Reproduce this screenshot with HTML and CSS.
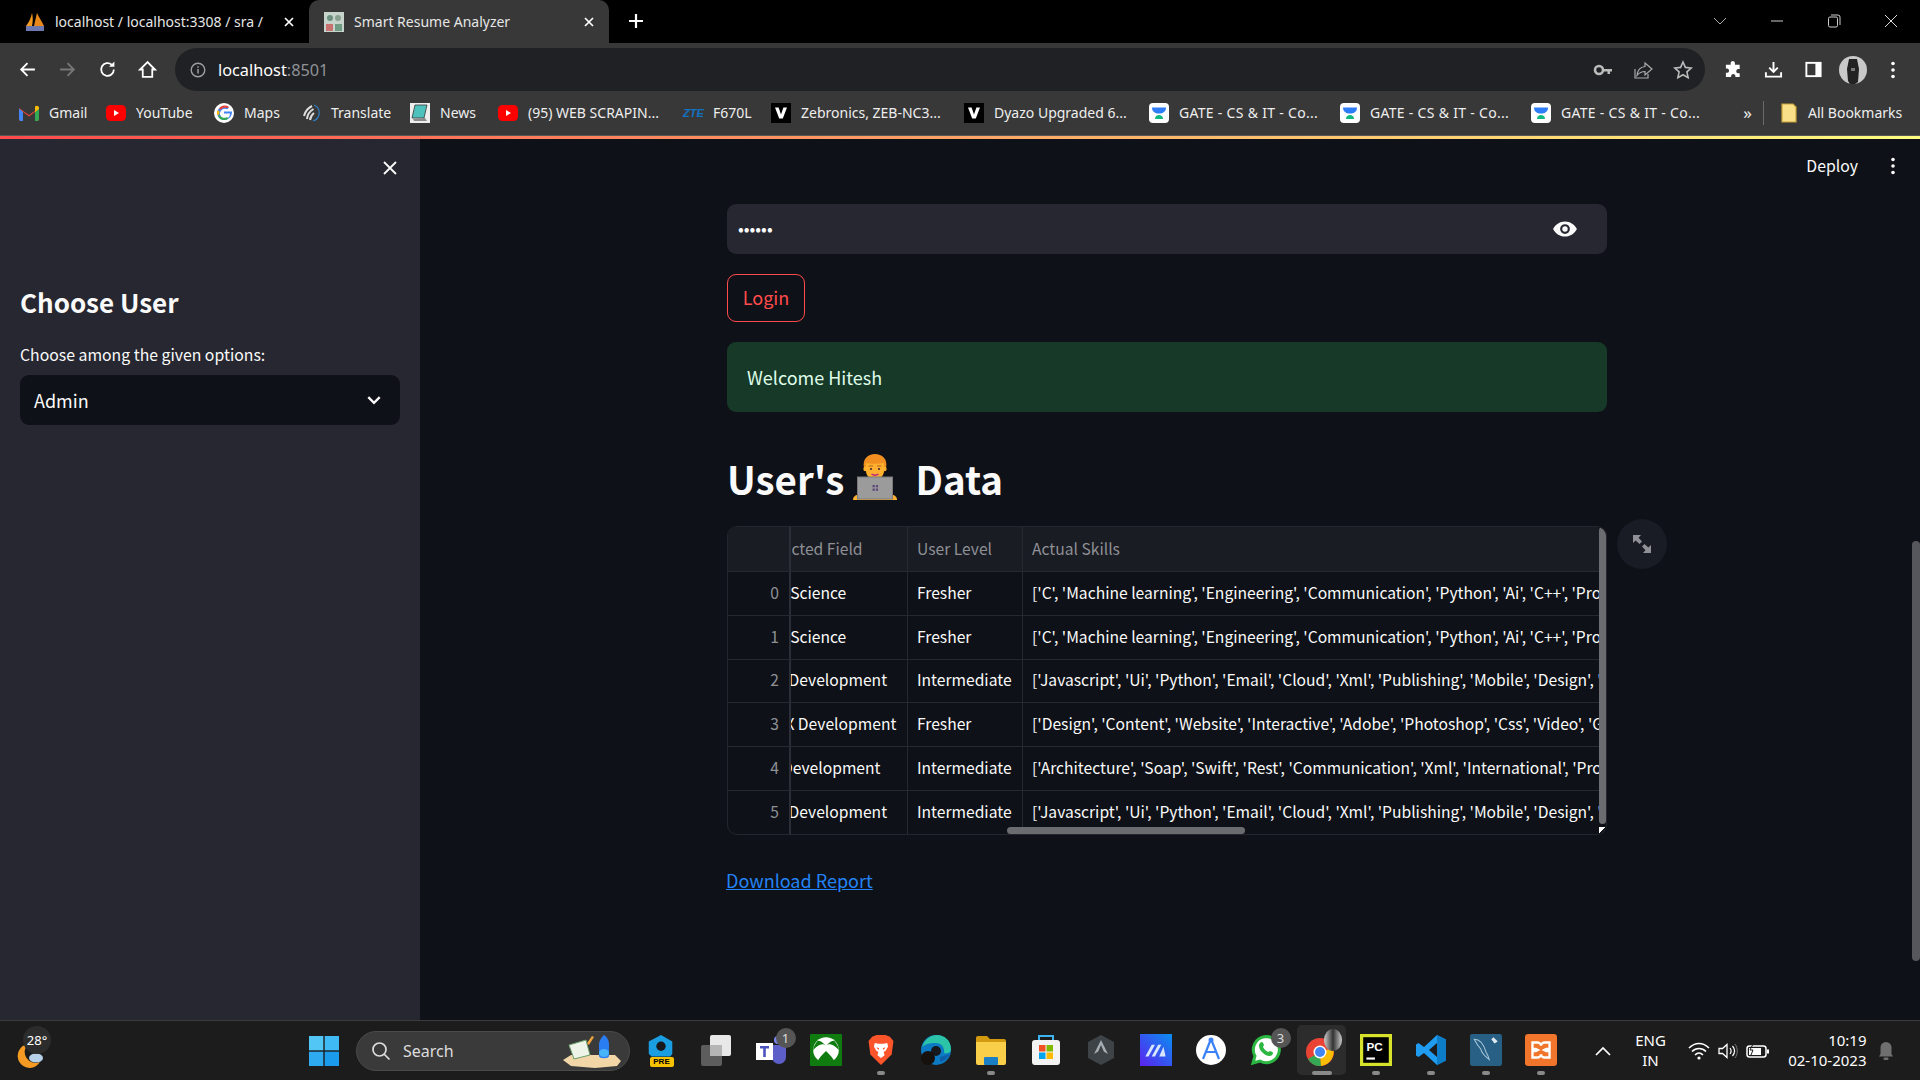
FILE: index.html
```html
<!DOCTYPE html>
<html lang="en">
<head>
<meta charset="utf-8">
<title>Smart Resume Analyzer</title>
<link rel="stylesheet" href="styles.css">
</head>
<body>
<svg class="defs" width="0" height="0" aria-hidden="true">
  <symbol id="gate" viewBox="0 0 20 20">
    <rect width="20" height="20" rx="4" fill="#fff"/>
    <path d="M3 4.500h14c0 4-3 6-7 6s-7-2-7-6z" fill="#2e7cf6"/>
    <path d="M6 16c0-3 2-4 4-4s4 1 4 4z" fill="#10b981"/>
  </symbol>
  <symbol id="vv" viewBox="0 0 20 20">
    <rect width="20" height="20" fill="#000"/>
    <path d="M4 4.500h3.600l2.400 7 2.400-7H16l-4.200 11H8.200z" fill="#fff"/>
  </symbol>
  <symbol id="yt" viewBox="0 0 20 16">
    <rect width="20" height="16" rx="4.500" fill="#f00"/>
    <path d="M8 5l5 3-5 3z" fill="#fff"/>
  </symbol>
</svg>

<div class="tabstrip">
  <div class="tab tab-off">
    <svg class="fav" viewBox="0 0 20 20"><path d="M1 14C4 10 6 6 7 1c1 4 1 8 0 13z" fill="#f29a1f"/><path d="M9 14c1-5 2-9 3-13 2 4 5 9 7 13z" fill="#e8871a"/><rect x="1" y="14" width="18" height="5" fill="#6c78af"/></svg>
    <span class="tab-text">localhost / localhost:3308 / sra /</span>
    <svg class="tab-x" viewBox="0 0 12 12"><path d="M2 2l8 8M10 2l-8 8" stroke="#fff" stroke-width="1.700"/></svg>
  </div>
  <div class="tab tab-on">
    <svg class="fav" viewBox="0 0 20 20"><rect width="20" height="20" fill="#c7d4cc"/><circle cx="6" cy="6" r="3" fill="#6d8f7f"/><circle cx="14" cy="6" r="3" fill="#87a08f"/><path d="M2 12h7v7H2z" fill="#c9716f"/><path d="M11 12h7v7h-7z" fill="#6f9c83"/></svg>
    <span class="tab-text">Smart Resume Analyzer</span>
    <svg class="tab-x" viewBox="0 0 12 12"><path d="M2 2l8 8M10 2l-8 8" stroke="#fff" stroke-width="1.700"/></svg>
  </div>
  <svg class="newtab" viewBox="0 0 16 16"><path d="M8 1v14M1 8h14" stroke="#fff" stroke-width="2.200"/></svg>
  <div class="winctl">
    <span class="wc"><svg viewBox="0 0 14 14"><path d="M1 4l6 6 6-6" fill="none" stroke="#aaa"/></svg></span>
    <span class="wc"><svg viewBox="0 0 14 14"><path d="M1 7h12" stroke="#ccc"/></svg></span>
    <span class="wc"><svg viewBox="0 0 14 14"><rect x="1.500" y="3" width="9" height="10" rx="1.500" fill="none" stroke="#ccc"/><path d="M4 1h7a2 2 0 0 1 2 2v8" fill="none" stroke="#ccc"/></svg></span>
    <span class="wc"><svg viewBox="0 0 14 14"><path d="M1 1l12 12M13 1L1 13" stroke="#ddd"/></svg></span>
  </div>
</div>

<div class="toolbar">
  <span class="tbtn"><svg viewBox="0 0 18 18"><path d="M16 9H3M9 3L3 9l6 6" fill="none" stroke="#fff" stroke-width="1.700"/></svg></span>
  <span class="tbtn"><svg viewBox="0 0 18 18"><path d="M2 9h13M9 3l6 6-6 6" fill="none" stroke="#777" stroke-width="1.700"/></svg></span>
  <span class="tbtn"><svg viewBox="0 0 18 18"><path d="M15 9a6 6 0 1 1-2-4.500" fill="none" stroke="#fff" stroke-width="1.700"/><path d="M15.500 1.500v5h-5z" fill="#fff"/></svg></span>
  <span class="tbtn"><svg viewBox="0 0 18 18"><path d="M9 2L2 9h2.500v7h9V9H16z" fill="none" stroke="#fff" stroke-width="1.700"/></svg></span>
  <div class="omni">
    <svg class="omni-info" viewBox="0 0 16 16"><circle cx="8" cy="8" r="6.800" fill="none" stroke="#9aa0a6" stroke-width="1.400"/><path d="M8 7v4.500M8 4.200v1.600" stroke="#9aa0a6" stroke-width="1.500"/></svg>
    <span class="omni-url">localhost<span class="omni-port">:8501</span></span>
    <span class="omni-end">
      <svg viewBox="0 0 20 20"><circle cx="6" cy="10" r="4" fill="none" stroke="#bbb" stroke-width="2.600"/><path d="M10 9h9v2.500h-2V14h-2.500v-2.500H10z" fill="#bbb"/></svg>
      <svg viewBox="0 0 20 20"><path d="M2 9v9h13v-4" fill="none" stroke="#aaa" stroke-width="1.200"/><path d="M12 3l7 6-7 6v-3.500C8 11.500 6 13 4 15.500c.5-5 3.500-8.500 8-9z" fill="none" stroke="#aaa" stroke-width="1.200"/></svg>
      <svg viewBox="0 0 20 20"><path d="M10 2l2.400 5.400 5.800.6-4.300 3.900 1.200 5.700L10 14.700l-5.100 2.900 1.200-5.700L1.800 8l5.800-.6z" fill="none" stroke="#bbb" stroke-width="1.600"/></svg>
    </span>
  </div>
  <span class="tbtn tbtn-first"><svg viewBox="0 0 20 20"><path d="M7 3a2.300 2.300 0 0 1 4.500 0V5h5v4.500h-1.800a2.300 2.300 0 0 0 0 4.500h1.800V18h-4.500v-1.500a2.300 2.300 0 0 0-4.500 0V18H2v-4.500h1.500a2.300 2.300 0 0 0 0-4.500H2V5h5z" fill="#fff"/></svg></span>
  <span class="tbtn"><svg viewBox="0 0 20 20"><path d="M10 2v10M5.500 8l4.500 4.500L14.500 8" fill="none" stroke="#fff" stroke-width="2"/><path d="M2 13v4.500h16V13" fill="none" stroke="#fff" stroke-width="2"/></svg></span>
  <span class="tbtn"><svg viewBox="0 0 20 20"><rect x="2.500" y="3" width="15" height="14" fill="none" stroke="#fff" stroke-width="2"/><rect x="12" y="3" width="5.500" height="14" fill="#fff"/></svg></span>
  <span class="tbtn"><svg class="avatar" viewBox="0 0 28 28"><circle cx="14" cy="14" r="14" fill="#c9c9c9"/><path d="M10 3h8l2 10-1 13-3 2h-5l-2-3-1-12z" fill="#222"/><path d="M12 12h4v3h-4z" fill="#777"/></svg></span>
  <span class="tbtn"><svg class="kebab" viewBox="0 0 6 20"><circle cx="3" cy="3.500" r="1.800" fill="#fff"/><circle cx="3" cy="10" r="1.800" fill="#fff"/><circle cx="3" cy="16.500" r="1.800" fill="#fff"/></svg></span>
</div>

<div class="bookmarks">
  <span class="bm"><svg viewBox="0 0 20 16"><path d="M0 3l10 7 10-7v11a2 2 0 0 1-2 2h-2V7l-6 4.500L4 7v9H2a2 2 0 0 1-2-2z" fill="#ea4335"/><path d="M0 3.500V14a2 2 0 0 0 2 2h2V7z" fill="#4285f4"/><path d="M16 7v9h2a2 2 0 0 0 2-2V3.500z" fill="#34a853"/><path d="M16 1.500V7l4-3V3c0-2-2.500-3-4-1.500z" fill="#fbbc04"/></svg>Gmail</span>
  <span class="bm"><svg viewBox="0 0 20 16"><use href="#yt"/></svg>YouTube</span>
  <span class="bm"><svg viewBox="0 0 20 20"><circle cx="10" cy="10" r="10" fill="#fff"/><path d="M16 10.500H10v-2h8c.3 4.500-3 8.500-7.800 8.500a7 7 0 1 1 4.700-12.200l-1.500 1.500A5 5 0 1 0 16 10.500z" fill="#4285f4"/><path d="M5 5.500a7 7 0 0 1 10-1.700l-1.500 1.500A5 5 0 0 0 6.800 6.800z" fill="#ea4335"/><path d="M3.500 12.500a7 7 0 0 1 0-5.500l2 1.500a5 5 0 0 0 0 2.600z" fill="#fbbc04"/><path d="M4 13.500l1.800-1.400A5 5 0 0 0 13 14l1.500 1.500A7 7 0 0 1 4 13.500z" fill="#34a853"/></svg>Maps</span>
  <span class="bm"><svg viewBox="0 0 20 20"><path d="M13 2a8.500 8.500 0 0 1-1 16" fill="none" stroke="#2f80c8" stroke-width="1.200"/><path d="M11 3C7 5 4 9 3 13M12.500 6C9 8 6.500 11 6 16M13 10c-2 1.500-3.500 4-4 7" fill="none" stroke="#ddd" stroke-width="2"/></svg>Translate</span>
  <span class="bm"><svg viewBox="0 0 20 20"><rect width="20" height="20" fill="#eee"/><path d="M5 2h12l-3 13H2z" fill="#4fc1bc" stroke="#333" stroke-width=".8"/><path d="M3 16l12-1 2 3H4z" fill="#8a8a8a"/></svg>News</span>
  <span class="bm"><svg viewBox="0 0 20 16"><use href="#yt"/></svg>(95) WEB SCRAPIN...</span>
  <span class="bm"><span class="zte">ZTE</span>F670L</span>
  <span class="bm"><svg viewBox="0 0 20 20"><use href="#vv"/></svg>Zebronics, ZEB-NC3...</span>
  <span class="bm"><svg viewBox="0 0 20 20"><use href="#vv"/></svg>Dyazo Upgraded 6...</span>
  <span class="bm bm-gate"><svg viewBox="0 0 20 20"><use href="#gate"/></svg>GATE - CS &amp; IT - Co...</span>
  <span class="bm bm-gate"><svg viewBox="0 0 20 20"><use href="#gate"/></svg>GATE - CS &amp; IT - Co...</span>
  <span class="bm bm-gate"><svg viewBox="0 0 20 20"><use href="#gate"/></svg>GATE - CS &amp; IT - Co...</span>
  <span class="bm bm-more">»</span>
  <span class="bm bm-all"><svg viewBox="0 0 16 20"><path d="M1 1h11l3 3v15H1z" fill="#fbe08a" stroke="#c9a437" stroke-width="1.200"/></svg>All Bookmarks</span>
</div>
<div class="deco"></div>

<div class="app">
  <aside class="sidebar">
    <div class="side-close"><svg viewBox="0 0 18 18"><path d="M3 3l12 12M15 3L3 15" stroke="#fafafa" stroke-width="1.800"/></svg></div>
    <h2 class="side-title">Choose User</h2>
    <div class="side-label">Choose among the given options:</div>
    <div class="select"><span>Admin</span><svg viewBox="0 0 14 14"><path d="M2 4.500l5 5 5-5" fill="none" stroke="#fafafa" stroke-width="2"/></svg></div>
  </aside>
  <main class="main">
    <div class="topbar">
      <span class="deploy">Deploy</span>
      <svg class="kebab" viewBox="0 0 6 20"><circle cx="3" cy="3.500" r="1.800" fill="#fafafa"/><circle cx="3" cy="10" r="1.800" fill="#fafafa"/><circle cx="3" cy="16.500" r="1.800" fill="#fafafa"/></svg>
    </div>
    <div class="content">
      <div class="pw"><span class="pw-dots">••••••</span>
        <svg viewBox="0 0 24 24"><path d="M12 5C7 5 3 8 1 12c2 4 6 7 11 7s9-3 11-7c-2-4-6-7-11-7zm0 11.500a4.500 4.500 0 1 1 0-9 4.500 4.500 0 0 1 0 9zm0-7a2.500 2.500 0 1 0 0 5 2.500 2.500 0 0 0 0-5z" fill="#fafafa"/></svg>
      </div>
      <button class="login">Login</button>
      <div class="alert">Welcome Hitesh</div>
      <h1 class="title"><span>User's</span>
        <svg class="emoji" viewBox="0 0 44 46"><path d="M11 14C9 5 15 0 22 0s13 5 11 14l-2 1H13z" fill="#f19020"/><circle cx="12.500" cy="15" r="2.200" fill="#ffb02e"/><circle cx="31.500" cy="15" r="2.200" fill="#ffb02e"/><path d="M13 9c3 1 12 1 18 0v8c0 5-4 8-9 8s-9-3-9-8z" fill="#ffb02e"/><rect x="15.500" y="11.500" width="4.500" height="1" fill="#b5651d"/><rect x="24" y="11.500" width="4.500" height="1" fill="#b5651d"/><circle cx="18" cy="15" r="1.100" fill="#402a32"/><circle cx="26" cy="15" r="1.100" fill="#402a32"/><path d="M18.500 20c2.500 1.800 4.500 1.800 7 0" stroke="#bb1d80" stroke-width="1.500" fill="none"/><path d="M0 46c0-3 2-5 5-5h34c3 0 5 2 5 5z" fill="#ffb02e"/><rect x="4.500" y="23" width="35" height="22" fill="#9b9b9b" stroke="#7a7a7a"/><rect x="19.500" y="31" width="2.300" height="2.300" fill="#5f4a7a"/><rect x="22.800" y="31" width="2.300" height="2.300" fill="#5f4a7a"/><rect x="19.500" y="34.500" width="2.300" height="2.300" fill="#5f4a7a"/><rect x="22.800" y="34.500" width="2.300" height="2.300" fill="#5f4a7a"/></svg>
        <span class="title-end">Data</span>
      </h1>
      <div class="table-row">
        <div class="table">
          <div class="tr th">
            <div class="c c-idx"></div>
            <div class="c c-field"><span class="scrolled">Predicted Field</span></div>
            <div class="c c-pad">User Level</div>
            <div class="c c-pad">Actual Skills</div>
          </div>
          <div class="tr">
            <div class="c c-idx">0</div>
            <div class="c c-field"><span class="scrolled">Data Science</span></div>
            <div class="c c-pad">Fresher</div>
            <div class="c c-pad">['C', 'Machine learning', 'Engineering', 'Communication', 'Python', 'Ai', 'C++', 'Programming', 'Analytics']</div>
          </div>
          <div class="tr">
            <div class="c c-idx">1</div>
            <div class="c c-field"><span class="scrolled">Data Science</span></div>
            <div class="c c-pad">Fresher</div>
            <div class="c c-pad">['C', 'Machine learning', 'Engineering', 'Communication', 'Python', 'Ai', 'C++', 'Programming', 'Analytics']</div>
          </div>
          <div class="tr">
            <div class="c c-idx">2</div>
            <div class="c c-field"><span class="scrolled">Web Development</span></div>
            <div class="c c-pad">Intermediate</div>
            <div class="c c-pad">['Javascript', 'Ui', 'Python', 'Email', 'Cloud', 'Xml', 'Publishing', 'Mobile', 'Design', 'Html', 'Css']</div>
          </div>
          <div class="tr">
            <div class="c c-idx">3</div>
            <div class="c c-field"><span class="scrolled">UI-UX Development</span></div>
            <div class="c c-pad">Fresher</div>
            <div class="c c-pad">['Design', 'Content', 'Website', 'Interactive', 'Adobe', 'Photoshop', 'Css', 'Video', 'Graphics', 'Html']</div>
          </div>
          <div class="tr">
            <div class="c c-idx">4</div>
            <div class="c c-field"><span class="scrolled">IOS Development</span></div>
            <div class="c c-pad">Intermediate</div>
            <div class="c c-pad">['Architecture', 'Soap', 'Swift', 'Rest', 'Communication', 'Xml', 'International', 'Programming', 'Ios']</div>
          </div>
          <div class="tr">
            <div class="c c-idx">5</div>
            <div class="c c-field"><span class="scrolled">Web Development</span></div>
            <div class="c c-pad">Intermediate</div>
            <div class="c c-pad">['Javascript', 'Ui', 'Python', 'Email', 'Cloud', 'Xml', 'Publishing', 'Mobile', 'Design', 'Html', 'Css']</div>
          </div>
          <div class="sb-v"></div>
          <div class="sb-h"></div>
          <div class="sb-corner"></div>
        </div>
        <div class="expand"><svg viewBox="0 0 20 20"><path d="M1 1h8L6.500 3.700 10 7.500 7.500 10 3.700 6.500 1 9z" fill="#8f9196"/><path d="M19 19h-8l2.500-2.700L10 12.500l2.500-2.500 3.800 3.500L19 11z" fill="#8f9196"/></svg></div>
      </div>
      <a class="dl" href="#">Download Report</a>
    </div>
    <div class="page-scroll"></div>
  </main>
</div>

<footer class="taskbar">
  <div class="tb-weather">
    <svg viewBox="0 0 30 28"><path d="M13 4a12 12 0 1 0 12 18A11 11 0 0 1 13 4z" fill="#f59a23"/><ellipse cx="21" cy="18" rx="7" ry="4.500" fill="#b8d1ea"/></svg>
    <span class="temp">28°</span>
  </div>
  <div class="tb-start"><svg viewBox="0 0 30 30"><rect width="14.300" height="14.300" fill="#52c6f5"/><rect x="15.700" width="14.300" height="14.300" fill="#3fbaf5"/><rect y="15.700" width="14.300" height="14.300" fill="#2eaaf0"/><rect x="15.700" y="15.700" width="14.300" height="14.300" fill="#1a9bec"/></svg></div>
  <div class="tb-search">
    <svg class="mag" viewBox="0 0 20 20"><circle cx="8.500" cy="8.500" r="6.500" fill="none" stroke="#ddd" stroke-width="1.700"/><path d="M13 13l5.500 5.500" stroke="#ddd" stroke-width="1.700"/></svg>
    <span>Search</span>
    <svg class="deco-search" viewBox="0 0 58 34"><path d="M0 26l8-5h44l6 6-4 5-22 2-24-2z" fill="#f2d6a7"/><path d="M6 11l17-5 4 15-16 4z" fill="#eef4e8" stroke="#6b9f6a"/><path d="M24 9l5-7 2 1-5 8z" fill="#f0a33b"/><path d="M36 22V11c0-5 3-8 5-10 3 2 5 5 5 10v11c0 3-10 3-10 0z" fill="#2a7df0"/><ellipse cx="41" cy="19" rx="5" ry="4" fill="#49b3f7"/></svg>
  </div>
  <div class="tb-apps">
    <span class="app-i"><svg viewBox="0 0 30 34"><path d="M15 1l12 7v13l-2 3H5l-3-3V8z" fill="#1b9de2"/><circle cx="15" cy="13" r="5" fill="#17191c"/></svg><span class="pre">PRE</span></span>
    <span class="app-i"><svg viewBox="0 0 32 32"><rect x="1" y="11" width="21" height="21" rx="2" fill="#5d5d5d"/><rect x="10" y="1" width="21" height="21" rx="2" fill="#e8e8e8"/><rect x="10" y="11" width="12" height="11" fill="#b5b5b5"/></svg></span>
    <span class="app-i"><svg viewBox="0 0 32 32"><path d="M17 11h11a3 3 0 0 1 3 3v9a7 7 0 0 1-14 0z" fill="#5b5fc7"/><circle cx="23" cy="6" r="4" fill="#7b83eb"/><rect x="1" y="9" width="17" height="17" fill="#fff"/><path d="M5 12h9v2.400h-3.200V23H8.200v-8.600H5z" fill="#4b53bc"/></svg><b class="badge">1</b></span>
    <span class="app-i"><svg viewBox="0 0 30 30"><rect width="30" height="30" rx="1" fill="#107c10"/><circle cx="15" cy="15" r="12" fill="#fff"/><path d="M15 11c-3-3-6-5-8-4.500C4 10 3 13 3 15c5-5 8-7 12-4zm0 0c3-3 6-5 8-4.500 3 3.500 4 6.500 4 8.500-5-5-8-7-12-4zm0 5c-4 4-7 7-8 10 5 3 11 3 16 0-1-3-4-6-8-10z" fill="#107c10"/></svg></span>
    <span class="app-i"><svg viewBox="0 0 30 36"><path d="M5 3l5-2h10l5 2 4 5-2 15-12 12L3 23 1 8z" fill="#fb542b"/><path d="M8 10l4 1h6l4-1 1 4-3 5-2 1 1 4-4 3-4-3 1-4-2-1-3-5z" fill="#fff"/><path d="M10 15l3 1-1 2zM20 15l-3 1 1 2z" fill="#fb542b"/></svg></span>
    <span class="app-i"><svg viewBox="0 0 32 32"><circle cx="16" cy="16" r="15" fill="#0c7bc4"/><path d="M2 14C4 6 10 1 17 1c7 0 14 5 14 14 0 4-4 5-7 4 1-6-3-10-8-10C9 9 4 10 2 14z" fill="#2bc4a8"/><circle cx="16" cy="17" r="5" fill="#17191c"/><circle cx="8" cy="24" r="7" fill="#17110d"/><path d="M20 28c4-1 8-4 10-8l-10 3z" fill="#0f5ea8"/></svg></span>
    <span class="app-i"><svg viewBox="0 0 32 32"><path d="M1 4a2 2 0 0 1 2-2h9l3 3h14a2 2 0 0 1 2 2v4H1z" fill="#d49a0f"/><path d="M1 8h30v21a2 2 0 0 1-2 2H3a2 2 0 0 1-2-2z" fill="#f9cf4a"/><rect x="9" y="23" width="14" height="8" rx="1" fill="#1b7fc6"/></svg></span>
    <span class="app-i"><svg viewBox="0 0 32 32"><path d="M9 7V2h14v5" fill="none" stroke="#3cb4f2" stroke-width="2"/><rect x="2" y="6" width="28" height="25" rx="3" fill="#f3f3f3"/><rect x="9" y="11" width="6.500" height="6.500" fill="#f25022"/><rect x="16.500" y="11" width="6.500" height="6.500" fill="#7fba00"/><rect x="9" y="18.500" width="6.500" height="6.500" fill="#00a4ef"/><rect x="16.500" y="18.500" width="6.500" height="6.500" fill="#ffb900"/></svg></span>
    <span class="app-i"><svg viewBox="0 0 28 32"><path d="M14 1l13 7v16l-13 7-13-7V8z" fill="#3e4347"/><path d="M14 6l7 14-7-4-7 4z" fill="#a6adb3"/><path d="M14 11l3 7-3-1-3 1z" fill="#3e4347"/></svg></span>
    <span class="app-i"><svg viewBox="0 0 30 30"><defs><linearGradient id="mg" x1="1" y1="0" x2="0" y2="1"><stop offset="0" stop-color="#0a8ef0"/><stop offset="1" stop-color="#5b22f0"/></linearGradient></defs><rect width="30" height="30" fill="url(#mg)"/><path d="M5 21l6-11h3l-6 11zM11 21l6-11h3l-6 11zM18 21l4-9 2 9z" fill="#d8e6ff"/></svg></span>
    <span class="app-i"><svg viewBox="0 0 30 32"><circle cx="15" cy="16" r="15" fill="#fff"/><path d="M15 5l8 20M15 5L7 25M9 18h12" fill="none" stroke="#3b82f6" stroke-width="2.200"/><circle cx="15" cy="6" r="2.500" fill="#3b82f6"/></svg></span>
    <span class="app-i"><svg viewBox="0 0 32 32"><path d="M3 29l2-7A13 13 0 1 1 10 27z" fill="#fff" stroke="#2cb742" stroke-width="3"/><path d="M10 9c2-2 3-1 4 2l-1 2c1 2 3 4 5 5l2-1c3 1 4 2 2 4-2 2-6 1-9-2-4-3-5-8-3-10z" fill="#2cb742"/></svg><b class="badge">3</b></span>
    <span class="app-i app-active"><svg viewBox="0 0 32 32"><circle cx="15" cy="18" r="14" fill="#ea4335"/><path d="M15 18L3 25a14 14 0 0 0 13 7z" fill="#34a853"/><path d="M15 18l1 14a14 14 0 0 0 12-18z" fill="#fbbc04"/><circle cx="15" cy="18" r="6.500" fill="#fff"/><circle cx="15" cy="18" r="5" fill="#4285f4"/></svg><i class="prof"></i></span>
    <span class="app-i"><svg viewBox="0 0 30 30"><rect width="30" height="30" fill="#d7e32a"/><rect x="3" y="3" width="24" height="24" fill="#000"/><rect x="6" y="22" width="8" height="2" fill="#fff"/><text class="pc" x="6" y="16">PC</text></svg></span>
    <span class="app-i"><svg viewBox="0 0 32 32"><path d="M22 1l9 4.500v21L22 31 9 19l-5.500 4L1 21.500v-11L3.500 9 9 13zM22 9l-8 7 8 7z" fill="#1f9cf0"/><path d="M22 1l9 4.500v21L22 31z" fill="#0e7dc8"/></svg></span>
    <span class="app-i"><svg viewBox="0 0 30 30"><rect width="30" height="30" rx="2" fill="#285f85"/><path d="M4 5c6 0 9 5 11 12 1 2 2 3 3 7-4-3-7-6-8-10-2-2-4-5-6-9z" fill="none" stroke="#a6c5d8"/><path d="M22 3l4 4-3 2-3-4z" fill="#dfeaf0"/></svg></span>
    <span class="app-i"><svg viewBox="0 0 30 30"><rect width="30" height="30" rx="3" fill="#f1752a"/><path d="M7 8h5c2 0 3 2 3 3 0-1 1-3 3-3h5v6h-3l-2 1 2 1h3v6h-5c-2 0-3-2-3-3 0 1-1 3-3 3H7v-6h3l2-1-2-1H7z" fill="none" stroke="#fff" stroke-width="2.200"/></svg></span>
    <i class="dot d5"></i><i class="dot d7"></i><i class="dot-wide"></i><i class="dot d14"></i><i class="dot d15"></i><i class="dot d16"></i><i class="dot d17"></i>
  </div>
  <div class="tray">
    <svg class="t-chev" viewBox="0 0 16 10"><path d="M1 9l7-7 7 7" fill="none" stroke="#fff" stroke-width="1.700"/></svg>
    <div class="t-lang">ENG<br>IN</div>
    <svg class="t-wifi" viewBox="0 0 22 18"><path d="M1 6c6-6 14-6 20 0M4 9.500c4-4 10-4 14 0M7 13c2.500-2.500 5.500-2.500 8 0" fill="none" stroke="#fff" stroke-width="1.600"/><circle cx="11" cy="16" r="1.600" fill="#fff"/></svg>
    <svg class="t-sound" viewBox="0 0 20 18"><path d="M1 6.500h3.500L9 2.500v13L4.500 11.500H1z" fill="none" stroke="#fff" stroke-width="1.300"/><path d="M12 6c1.500 2 1.500 4 0 6M14.500 4c2.500 3 2.500 7 0 10" fill="none" stroke="#fff" stroke-width="1.200"/><path d="M17 2c3 4 3 10 0 14" fill="none" stroke="#777"/></svg>
    <svg class="t-batt" viewBox="0 0 24 18"><rect x="1" y="4" width="19" height="11" rx="2.500" fill="none" stroke="#fff" stroke-width="1.500"/><rect x="3" y="6" width="12" height="7" fill="#fff"/><rect x="21" y="7.500" width="2" height="4" fill="#fff"/><path d="M8 0L4 8h3l-2 5" fill="none" stroke="#1c1c1c" stroke-width="1"/></svg>
    <div class="t-clock">10:19<br>02-10-2023</div>
    <svg class="t-bell" viewBox="0 0 16 20"><path d="M8 1a5.500 5.500 0 0 0-5.500 5.500V13L1 15.500h14L13.500 13V6.500A5.500 5.500 0 0 0 8 1z" fill="#6f6f6f"/><rect x="5.500" y="16.500" width="5" height="2.500" rx="1" fill="#6f6f6f"/></svg>
  </div>
</footer>
</body>
</html>
```
FILE: styles.css
```css
* { box-sizing: border-box; }
html, body { margin: 0; padding: 0; height: 100%; overflow: hidden; }
body {
  width: 1920px; height: 1080px; display: flex; flex-direction: column;
  background: #0e1117; color: #fafafa;
  font-family: "Noto Sans", "Open Sans", sans-serif;
}
.defs { position: absolute; }
svg { display: block; flex: none; }

/* browser chrome */
.tabstrip { height: 43px; flex: none; background: #000; display: flex; align-items: center; padding-bottom: 1px; }
.tab { height: 43px; width: 300px; display: flex; align-items: center; position: relative; font-size: 14px; color: #e6e6e6; margin-bottom: -1px; }
.tab-off { width: 309px; padding-left: 25px; }
.tab-on { background: #383838; border-radius: 10px 10px 0 0; padding-left: 15px; }
.fav { width: 20px; height: 20px; margin-right: 10px; }
.tab-text { flex: 1; white-space: nowrap; overflow: hidden; }
.tab-x { width: 12px; height: 12px; margin: 0 14px 0 8px; }
.newtab { width: 16px; height: 16px; margin-left: 19px; }
.winctl { margin-left: auto; display: flex; margin-right: 1px; }
.wc { width: 57px; display: flex; justify-content: center; }
.wc svg { width: 14px; height: 14px; }

.toolbar { height: 48px; flex: none; background: #383838; padding: 5px 7px 0 7px; display: flex; align-items: center; }
.tbtn { width: 40px; height: 43px; display: flex; align-items: center; justify-content: center; }
.tbtn svg { width: 19px; height: 19px; }
.tbtn-first { margin-left: 8px; }
.tbtn svg.avatar { width: 28px; height: 28px; }
.tbtn svg.kebab { width: 6px; height: 20px; }
.omni { width: 1530px; margin-left: 8px; height: 43px; border-radius: 22px; background: #202124; display: flex; align-items: center; padding-left: 15px; }
.omni-info { width: 16px; height: 16px; }
.omni-url { margin-left: 12px; font-size: 16.300px; color: #fff; }
.omni-port { color: #8f9296; }
.omni-end { margin-left: auto; display: flex; gap: 20px; padding-right: 12px; }
.omni-end svg { width: 20px; height: 20px; }

.bookmarks {
  height: 44px; flex: none; background: #383838; font-size: 14px; color: #eee;
  display: grid; align-items: center; padding: 0 0 1px 19px;
  grid-template-columns: 87px 108px 87px 109px 88px 185px 88px 193px 185px 191px 191px 191px 41px 1fr;
}
.bm { display: flex; align-items: center; gap: 10px; white-space: nowrap; }
.bm-gate { letter-spacing: .3px; }
.bm svg { width: 20px; height: 20px; }
.zte { font: italic 700 11px "Liberation Sans", sans-serif; color: #1273c4; width: 20px; }
.bm-more { font-size: 17px; justify-content: flex-end; padding-right: 11px; }
.bm-all { border-left: 1px solid #6a6a6a; padding-left: 17px; height: 24px; gap: 11px; }
.bm-all svg { width: 16px; height: 20px; }
.deco { height: 4px; flex: none; background: linear-gradient(90deg, #ff4b4b, #fffd80); border-top: 1px solid #555; background-clip: padding-box; }

/* streamlit app */
.app { flex: 1; display: flex; min-height: 0; font-family: "Noto Sans CJK JP", "Noto Sans", sans-serif; }
.sidebar { width: 420px; flex: none; background: #262730; padding: 20px 20px 0; }
.side-close { display: flex; justify-content: flex-end; padding-right: 1px; }
.side-close svg { width: 18px; height: 18px; }
.side-title { margin: 107px 0 0; font-size: 26px; line-height: 36px; font-weight: 600; }
.side-label { margin-top: 24px; font-size: 15.800px; line-height: 22px; }
.select { margin-top: 9px; height: 50px; border-radius: 9px; background: #0e1117; padding: 0 18px 0 14px; display: flex; align-items: center; justify-content: space-between; font-size: 18px; }
.select span { margin-bottom: 1px; }
.select svg { width: 16px; height: 16px; }

.main { flex: 1; position: relative; min-width: 0; }
.topbar { position: absolute; top: 15px; right: 24px; display: flex; align-items: center; gap: 32px; font-size: 15.800px; line-height: 24px; }
.topbar .kebab { width: 6px; height: 20px; }
.content { padding: 65px 0 0 307px; width: 1187px; }
.pw { height: 50px; border-radius: 9px; background: #262730; display: flex; align-items: center; justify-content: space-between; padding: 0 29px 0 11px; }
.pw-dots { font-size: 17px; letter-spacing: 0; margin-bottom: 3px; }
.pw svg { width: 26px; height: 26px; }
.login { display: block; margin-top: 20px; width: 78px; height: 48px; background: transparent; border: 1px solid #ff4b4b; border-radius: 9px; color: #ff4b4b; font: 400 18px "Noto Sans CJK JP", sans-serif; padding: 0 0 2px; }
.alert { margin-top: 20px; height: 70px; border-radius: 9px; background: #173928; color: #dffde9; font-size: 18px; display: flex; align-items: center; padding: 0 0 1px 20px; }
.title { margin: 0; padding: 39px 0 21px; font-size: 38.500px; line-height: 54px; font-weight: 600; display: flex; align-items: center; gap: 9px; }
.emoji { width: 44px; height: 46px; margin-top: -2px; }
.title-end { margin-left: 9px; }

.table-row { display: flex; gap: 10px; align-items: flex-start; width: 940px; }
.table { width: 880px; height: 309px; position: relative; overflow: hidden; border: 1px solid #23262e; border-radius: 10px; flex: none; font-size: 15.650px; }
.tr { display: grid; grid-template-columns: 63px 117px 115px 1fr; height: 43.750px; border-bottom: 1px solid #262930; align-items: stretch; }
.tr:last-of-type { border-bottom: 0; }
.th { background: #1a1c24; color: #8e9095; height: 45px; }
.c { display: flex; align-items: center; white-space: nowrap; overflow: hidden; border-right: 1px solid #262930; padding-bottom: 2px; }
.c-idx { justify-content: flex-end; padding-right: 10px; color: #8e9095; border-right: 2px solid #2b2e36; }
.c-field { border-right: 1px solid #262930; }
.scrolled { margin-left: -38px; }
.c-pad { padding-left: 9px; border-right: 0; }
.tr .c-pad:nth-child(3) { border-right: 1px solid #262930; }
.sb-v { position: absolute; right: 0; top: 0; width: 7px; height: 297px; border-radius: 4px; background: #6b6c70; }
.sb-h { position: absolute; left: 279px; bottom: 0; width: 238px; height: 7px; border-radius: 4px; background: #6b6c70; }
.sb-corner { position: absolute; right: 0; bottom: 0; width: 7px; height: 7px; background: linear-gradient(135deg, #fff 50%, #0e1117 50%); }
.expand { width: 50px; height: 50px; border-radius: 50%; background: #191c24; margin-top: -7px; display: flex; align-items: center; justify-content: center; }
.expand svg { width: 20px; height: 20px; }
.dl { display: inline-block; margin: 30px 0 0 -1px; font-size: 18px; line-height: 30px; color: #2383f5; }
.page-scroll { position: absolute; right: 0; top: 402px; width: 8px; height: 420px; border-radius: 4px; background: #56575c; }

/* taskbar */
.taskbar { height: 60px; flex: none; background: #1c1c1c; border-top: 1px solid #3c3c3c; display: flex; align-items: center; font-family: "Noto Sans", sans-serif; color: #fff; }
.tb-weather { width: 296px; padding-left: 15px; position: relative; }
.tb-weather svg { width: 30px; height: 28px; margin-top: 6px; }
.temp { position: absolute; left: 23px; top: -8px; width: 28px; height: 28px; line-height: 28px; text-align: center; border-radius: 50%; background: #2c2c2c; font-size: 13px; }
.tb-start { width: 60px; padding-left: 13px; }
.tb-start svg { width: 30px; height: 30px; }
.tb-search { width: 274px; height: 40px; border-radius: 20px; background: #3a3a3a; border: 1px solid #4a4a4a; display: flex; align-items: center; padding-left: 14px; font-size: 16px; color: #ddd; position: relative; }
.mag { width: 20px; height: 20px; margin-right: 12px; }
.deco-search { width: 58px; height: 34px; margin-left: auto; margin-right: 8px; }
.tb-apps { margin-left: 3.500px; display: grid; grid-template-columns: repeat(17, 55px); position: relative; height: 59px; align-items: center; }
.app-i { display: flex; align-items: center; justify-content: center; height: 50px; position: relative; margin-top: -2px; }
.app-i svg { width: 32px; height: 32px; }
.app-active { background: #2c2c2c; border-radius: 5px; margin: -2px 3px 0; }
.pre { position: absolute; left: 16px; bottom: 8px; width: 24px; height: 10px; background: #f7c200; color: #000; font: 700 8px/10px "Liberation Sans", sans-serif; text-align: center; border-radius: 2px; }
.badge { position: absolute; right: 3px; top: 3px; width: 20px; height: 20px; border-radius: 50%; background: #555; color: #ddd; font: 400 13px/20px "Noto Sans", sans-serif; text-align: center; }
.prof { position: absolute; right: 4px; top: 4px; width: 18px; height: 22px; border-radius: 50%; background: linear-gradient(90deg, #ccc, #333 50%, #ccc); }
.pc { font: 700 11px "Liberation Sans", sans-serif; fill: #fff; }
.dot, .dot-wide { position: absolute; bottom: 5px; height: 4px; width: 8px; border-radius: 2px; background: #8a8a8a; }
.d5 { left: 243.500px; } .d7 { left: 353.500px; }
.d14 { left: 738.500px; } .d15 { left: 793.500px; } .d16 { left: 848.500px; } .d17 { left: 903.500px; }
.dot-wide { left: 678px; width: 20px; }
.tray { flex: 1; display: flex; align-items: center; padding-left: 26px; font-size: 15px; }
.t-chev { width: 16px; height: 10px; }
.t-lang { width: 40px; margin-left: 20px; text-align: center; line-height: 20px; margin-top: -1px; }
.t-wifi { width: 22px; height: 18px; margin-left: 17px; }
.t-sound { width: 20px; height: 18px; margin-left: 8px; }
.t-batt { width: 24px; height: 18px; margin-left: 8px; }
.t-clock { width: 90px; margin-left: 7px; text-align: right; line-height: 20px; margin-top: -2px; white-space: nowrap; }
.t-bell { width: 16px; height: 20px; margin-left: 11px; }
```
